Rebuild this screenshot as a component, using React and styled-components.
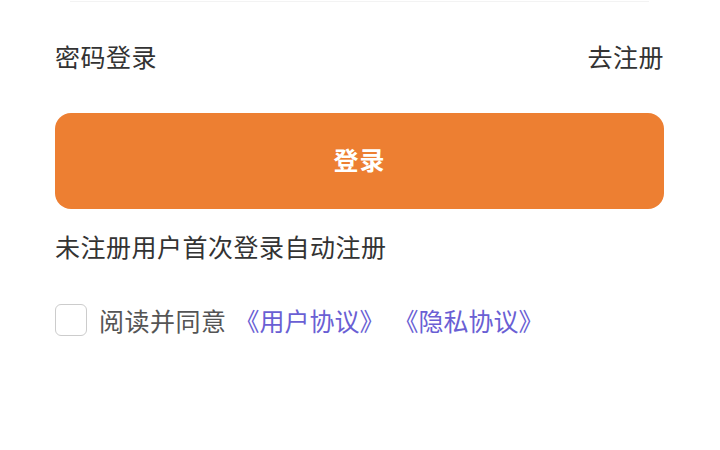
import React, { useState } from "react"
import styled, { createGlobalStyle } from "styled-components"

const GlobalStyle = createGlobalStyle`
	html, body {
		margin: 0;
		padding: 0;
		background: #ffffff;
	}
	body {
		font-family: "Noto Sans CJK SC", "Noto Sans", sans-serif;
		color: #333333;
	}
`

const Page = styled.div`
	width: 720px;
	height: 450px;
	padding: 0 56px 0 55px;
	box-sizing: border-box;
	overflow: hidden;
	font-size: 25px;
	letter-spacing: 0.5px;
`

const InputLine = styled.div`
	height: 1px;
	margin: 1px 15px 0;
	background: #f3f3f3;
`

const SwitchRow = styled.div`
	display: flex;
	justify-content: space-between;
	align-items: center;
	margin-top: 38px;
	height: 32px;
	line-height: 32px;
	color: #333333;
`

const SwitchLink = styled.span`
	cursor: pointer;
`

const LoginButton = styled.button`
	display: block;
	width: 100%;
	height: 96px;
	margin-top: 41px;
	padding: 0 0 5px;
	border: none;
	border-radius: 16px;
	background: #ed7f32;
	color: #ffffff;
	font-family: inherit;
	font-size: 25px;
	font-weight: 700;
	letter-spacing: 1px;
	cursor: pointer;
	:focus {
		outline: none;
	}
`

const Hint = styled.div`
	margin-top: 21px;
	line-height: 32px;
	color: #333333;
`

const AgreeRow = styled.div`
	display: flex;
	align-items: center;
	margin-top: 42px;
	height: 32px;
	line-height: 32px;
`

const CheckBox = styled.span`
	width: 32px;
	height: 32px;
	box-sizing: border-box;
	border: 1px solid ${(props) => (props.checked ? "#ed7f32" : "#cccccc")};
	background: ${(props) => (props.checked ? "#ed7f32" : "#ffffff")};
	border-radius: 6px;
	margin-right: 12px;
	cursor: pointer;
	flex-shrink: 0;
`

const AgreeText = styled.span`
	color: #555555;
`

const DocLink = styled.a`
	color: #6a5fd4;
	text-decoration: none;
	letter-spacing: 0;
	margin-left: ${(props) => props.gap || "8px"};
	cursor: pointer;
`

export default function App() {
	const [agreed, setAgreed] = useState(false)

	return (
		<>
			<GlobalStyle />
			<Page>
				<InputLine />
				<SwitchRow>
					<SwitchLink>密码登录</SwitchLink>
					<SwitchLink>去注册</SwitchLink>
				</SwitchRow>
				<LoginButton>登录</LoginButton>
				<Hint>未注册用户首次登录自动注册</Hint>
				<AgreeRow>
					<CheckBox checked={agreed} onClick={() => setAgreed(!agreed)} />
					<AgreeText>阅读并同意</AgreeText>
					<DocLink>《用户协议》</DocLink>
					<DocLink gap="9px">《隐私协议》</DocLink>
				</AgreeRow>
			</Page>
		</>
	)
}
